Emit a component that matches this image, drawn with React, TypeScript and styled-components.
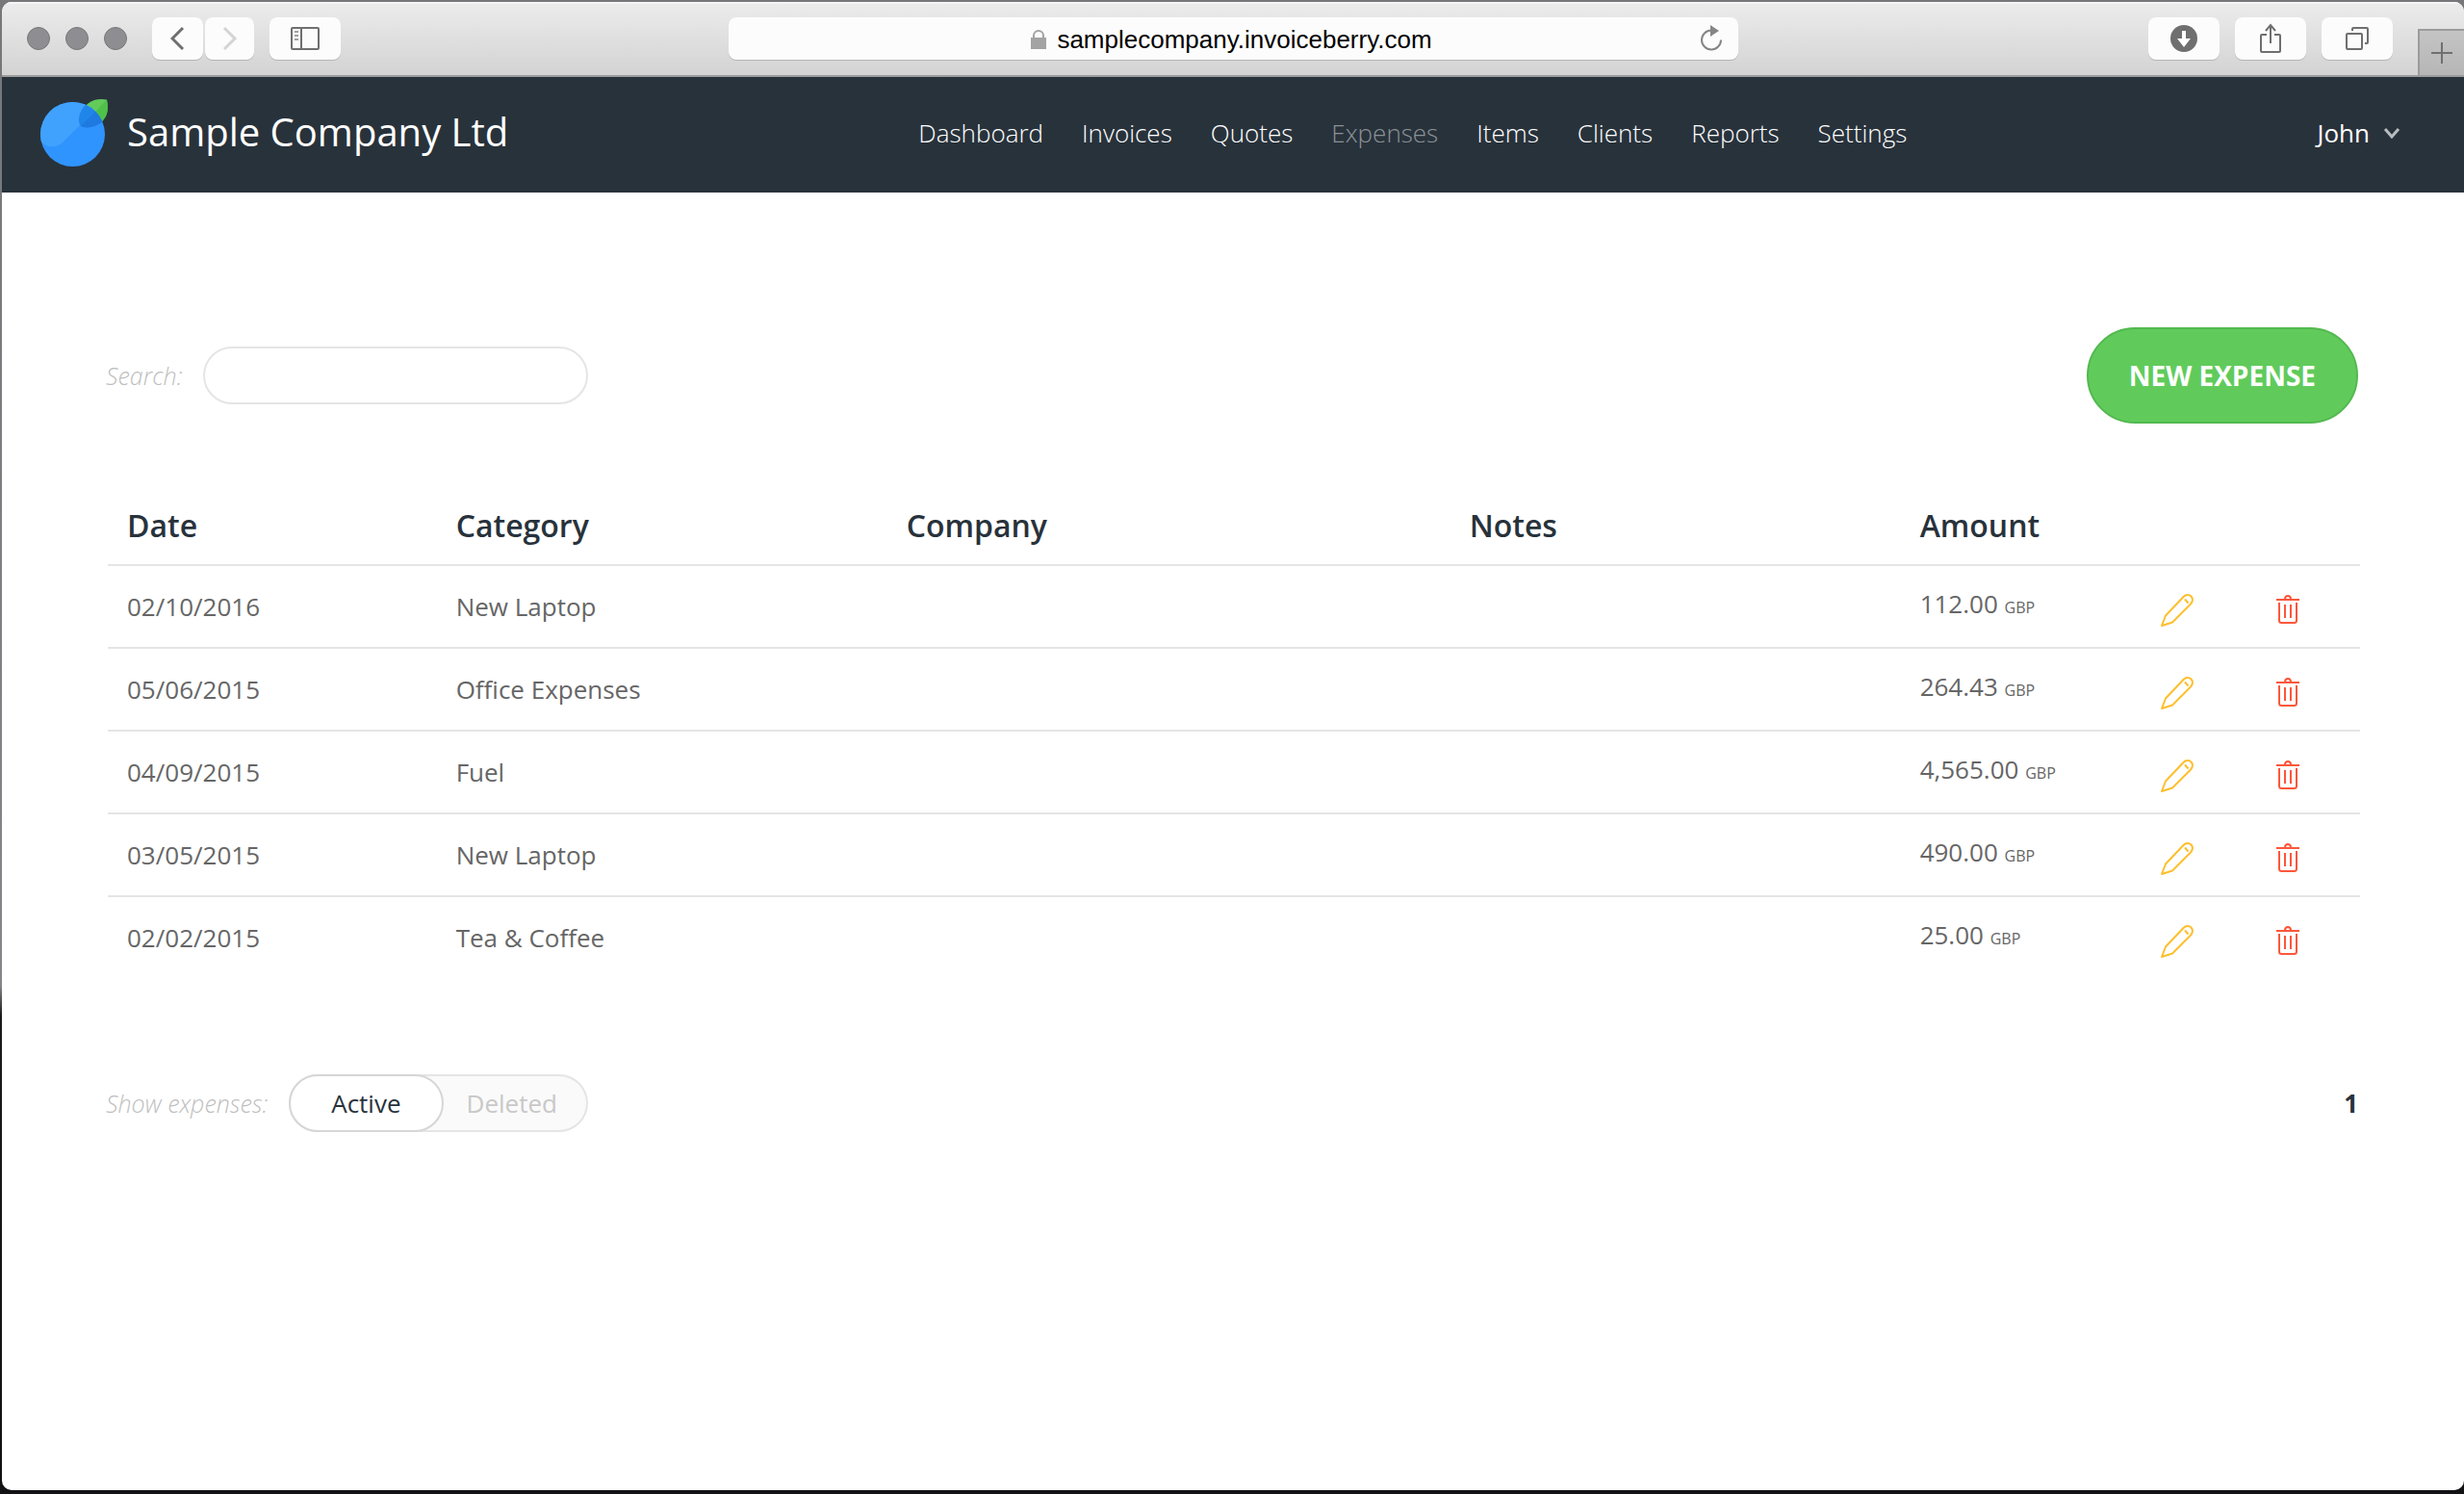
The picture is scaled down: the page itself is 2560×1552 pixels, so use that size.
import React, { useState } from "react";
import styled, { createGlobalStyle, css } from "styled-components";

const ink = "#28323b";
const line = "#e5e5e5";
const muted = "#c8c8c8";

const GlobalStyle = createGlobalStyle`
  *, *::before, *::after { box-sizing: border-box; }
  html, body, #root { height: 100%; }
  body {
    margin: 0;
    background: linear-gradient(#77777a 0%, #85858a 66%, #1a1a1c 68%, #121113 100%);
    font-family: "Open Sans", "Noto Sans", sans-serif;
    font-size: 26px;
    line-height: 36px;
    color: #666;
  }
  button, input { font: inherit; color: inherit; margin: 0; }
  button { cursor: pointer; }
`;

const Desktop = styled.div`
  min-height: 100%;
  display: flex;
  padding: 2px 0 4px 2px;
`;

const Window = styled.div`
  flex: 1;
  display: flex;
  flex-direction: column;
  background: #fff;
  border-radius: 10px;
  overflow: hidden;
`;

/* ---------- browser chrome ---------- */

const Chrome = styled.div`
  display: grid;
  grid-template-columns: 1fr minmax(0, 1049px) 1fr;
  height: 78px;
  background: linear-gradient(#ececec, #d3d3d3);
  border-bottom: 2px solid #9b9b9b;
  box-shadow: inset 0 2px 0 #f6f6f6;
`;

const ChromeSide = styled.div<{ $end?: boolean }>`
  display: flex;
  align-items: flex-start;
  padding-top: 16px;
  ${(p) => (p.$end ? css`justify-content: flex-end; gap: 16px;` : css`padding-left: 26px; gap: 16px;`)}
`;

const Lights = styled.div`
  display: flex;
  align-items: center;
  gap: 16px;
  height: 44px;
  margin-right: 10px;
`;

const Light = styled.span`
  width: 24px;
  height: 24px;
  border-radius: 50%;
  background: #8e8e92;
  border: 1px solid #77777a;
`;

const ButtonPair = styled.div`
  display: flex;
  gap: 2px;
`;

const ChromeButton = styled.button<{ $width?: number }>`
  display: flex;
  align-items: center;
  justify-content: center;
  width: ${(p) => p.$width ?? 74}px;
  height: 44px;
  padding: 0;
  border: 0;
  border-radius: 8px;
  background: #fcfcfc;
  box-shadow: 0 1px 0 #b5b5b5;
`;

const AddressBar = styled.div`
  display: grid;
  grid-template-columns: 1fr auto 1fr;
  align-items: center;
  height: 44px;
  margin-top: 16px;
  padding: 0 16px 0 12px;
  border-radius: 8px;
  background: #fcfcfc;
  box-shadow: 0 1px 0 #b5b5b5;
`;

const Address = styled.div`
  grid-column: 2;
  display: flex;
  align-items: center;
  gap: 10px;
  padding-top: 2px;
  font-family: "Liberation Sans", Arial, sans-serif;
  font-size: 26px;
  color: #000;
`;

const PlainButton = styled.button`
  display: flex;
  padding: 0;
  border: 0;
  background: none;
`;

const Reload = styled(PlainButton)`
  justify-self: end;
`;

const NewTab = styled.button`
  align-self: flex-end;
  display: flex;
  align-items: center;
  justify-content: center;
  width: 48px;
  height: 48px;
  margin-left: 10px;
  padding: 0;
  border: solid #9b9b9b;
  border-width: 2px 0 0 2px;
  background: linear-gradient(#c4c4c4, #b6b6b6);
`;

/* ---------- application header ---------- */

const Header = styled.header`
  display: flex;
  align-items: center;
  justify-content: space-between;
  height: 120px;
  padding: 0 66px 4px 40px;
  background: ${ink};
  color: #fff;
`;

const Brand = styled.a`
  display: flex;
  align-items: center;
  gap: 18px;
  color: inherit;
  text-decoration: none;
  font-size: 40px;
  line-height: 56px;
  white-space: nowrap;
`;

const BrandName = styled.span`
  padding-bottom: 2px;
`;

const Nav = styled.nav`
  display: flex;
  gap: 40px;
`;

const NavLink = styled.a<{ $current?: boolean }>`
  color: ${(p) => (p.$current ? "#8b9196" : "#fff")};
  font-weight: 300;
  text-decoration: none;
`;

const UserMenu = styled(PlainButton)`
  align-items: center;
  gap: 14px;
`;

/* ---------- page ---------- */

const Page = styled.main`
  padding: 140px 108px 0;
`;

const Bar = styled.div`
  display: flex;
  align-items: center;
  justify-content: space-between;
  padding-right: 2px;
`;

const Field = styled.div`
  display: flex;
  align-items: center;
  gap: 22px;
`;

const Caption = styled.label`
  font-size: 25px;
  font-weight: 300;
  font-style: italic;
  color: #bebebe;
`;

const SearchInput = styled.input`
  width: 400px;
  height: 60px;
  padding: 0 28px;
  border: 2px solid ${line};
  border-radius: 30px;
  background: #fff;
`;

const Primary = styled.button`
  height: 100px;
  padding: 0 42px;
  border: 2px solid #53b850;
  border-radius: 50px;
  background: #60cb5b;
  color: #fff;
  font-size: 28px;
  font-weight: 700;
  text-transform: uppercase;
`;

const TableArea = styled.section`
  padding: 66px 0 98px 2px;
`;

const Table = styled.table`
  width: 100%;
  border-collapse: separate;
  border-spacing: 0;
  table-layout: fixed;
`;

const Col = styled.col<{ $share: string }>`
  width: ${(p) => p.$share};
`;

const Th = styled.th`
  height: 82px;
  padding: 0 20px;
  border-bottom: 2px solid ${line};
  text-align: left;
  font-size: 32px;
  font-weight: 600;
  color: ${ink};
`;

const Row = styled.tr``;

const Td = styled.td`
  height: 86px;
  padding: 0 20px;
  border-bottom: 2px solid ${line};
  white-space: nowrap;

  ${Row}:last-child & { border-bottom-color: transparent; }
`;

const AmountTd = styled(Td)`
  padding-bottom: 2px;
`;

const Currency = styled.span`
  font-size: 16px;
`;

const IconTd = styled(Td)<{ $last?: boolean }>`
  padding: 8px ${(p) => (p.$last ? 18 : 0)}px 0 0;

  ${PlainButton} { margin: 0 auto; }
`;

const Toggle = styled.div`
  display: flex;
  height: 60px;
  border-radius: 30px;
  background: #fafafa;
  box-shadow: inset 0 0 0 2px ${line};
`;

const ToggleOption = styled.button<{ $on: boolean }>`
  height: 60px;
  padding: 0 ${(p) => (p.$on ? 42 : 30)}px 0 ${(p) => (p.$on ? 42 : 22)}px;
  border: 2px solid ${(p) => (p.$on ? "#d6d6d6" : "transparent")};
  border-radius: 30px;
  background: ${(p) => (p.$on ? "#fff" : "transparent")};
  color: ${(p) => (p.$on ? ink : muted)};
`;

const PageLink = styled.a`
  font-weight: 700;
  color: ${ink};
  text-decoration: none;
`;

/* ---------- drawings ---------- */

const stroke = { fill: "none", stroke: "#6f6f6f", strokeWidth: 2 } as const;

const Logo = () => (
  <svg width="72" height="72" viewBox="0 0 72 72" aria-hidden="true">
    <defs>
      <clipPath id="berry"><circle cx="33.500" cy="37.500" r="33.500" /></clipPath>
    </defs>
    <path d="M69 1.500C56 -1 45 5 41 18c-1 5-1 9 1 12 6 2 16 0 22-6 5-5 7-12 5-22.500z" fill="#62cb5a" />
    <path d="M69 1.500C71 13 70 19 62 26L42 30z" fill="#4fc04a" />
    <circle cx="33.500" cy="37.500" r="33.500" fill="#3094ff" />
    <g clipPath="url(#berry)">
      <path d="M0 0H67L43 26 24 45C18 52 7 52 0 45z" fill="#40a2fd" />
      <path d="M69 1.500C56 -1 45 5 41 16c-2 6-1 11 1 13 6 3 16 1 22-5z" fill="#2085e8" />
      <path d="M67 4L42 29c6 3 16 1 23-5z" fill="#1f7ae0" />
    </g>
  </svg>
);

const Pencil = () => (
  <svg width="36" height="36" viewBox="0 0 36 36" fill="none" stroke="#fdbf2d" strokeWidth="2" strokeLinejoin="round">
    <path d="M2 34L6 23.500 24.500 4C27 1.500 30.500 1.500 32.500 3.500S34.500 9 32 11.500L13 30.500z" />
    <path d="M26 6.500L29.500 10.500" />
  </svg>
);

const Trash = () => (
  <svg width="24" height="32" viewBox="0 0 24 32" fill="none" stroke="#fc573b" strokeWidth="2">
    <path d="M0 5H24M9 4.500Q9 1 12 1Q15 1 15 4.500" />
    <path d="M3 8V26.500Q3 29 5.500 29H18.500Q21 29 21 26.500V8M9 10V24M15 10V24" />
  </svg>
);

type Expense = { date: string; category: string; company?: string; notes?: string; amount: string };

const expenses: Expense[] = [
  { date: "02/10/2016", category: "New Laptop", amount: "112.00" },
  { date: "05/06/2015", category: "Office Expenses", amount: "264.43" },
  { date: "04/09/2015", category: "Fuel", amount: "4,565.00" },
  { date: "03/05/2015", category: "New Laptop", amount: "490.00" },
  { date: "02/02/2015", category: "Tea & Coffee", amount: "25.00" },
];

const sections = ["Dashboard", "Invoices", "Quotes", "Expenses", "Items", "Clients", "Reports", "Settings"];
const shares = ["14.6%", "20%", "25%", "20%", "9.8%", "5%", "5.6%"];

const BrowserChrome = () => (
  <Chrome>
    <ChromeSide>
      <Lights><Light /><Light /><Light /></Lights>
      <ButtonPair>
        <ChromeButton $width={53} aria-label="Back">
          <svg width="16" height="26" viewBox="0 0 16 26" {...stroke} strokeWidth="3"><path d="M13 2L2 13 13 24" /></svg>
        </ChromeButton>
        <ChromeButton $width={51} aria-label="Forward">
          <svg width="16" height="26" viewBox="0 0 16 26" {...stroke} stroke="#d4d4d4" strokeWidth="3"><path d="M2 2L13 13 2 24" /></svg>
        </ChromeButton>
      </ButtonPair>
      <ChromeButton aria-label="Sidebar">
        <svg width="30" height="24" viewBox="0 0 30 24" {...stroke}>
          <rect x="1" y="1" width="28" height="22" rx="1" />
          <path d="M11 1V23" />
          <path d="M4 5H8M4 9H8M4 13H8" stroke="#a0a0a0" />
        </svg>
      </ChromeButton>
    </ChromeSide>
    <AddressBar>
      <Address>
        <svg width="18" height="20" viewBox="0 0 18 20" aria-hidden="true">
          <path d="M1 8H17V20H1z" fill="#a3a3a3" />
          <path d="M4 9V6a5 5 0 0 1 10 0V9" fill="none" stroke="#a3a3a3" strokeWidth="2" />
        </svg>
        samplecompany.invoiceberry.com
      </Address>
      <Reload aria-label="Reload">
        <svg width="24" height="28" viewBox="0 0 24 28">
          <path d="M12 5.500A10 10 0 1 0 22 15.500" fill="none" stroke="#858585" strokeWidth="2" />
          <path d="M11 0L20 6 11 12z" fill="#858585" />
        </svg>
      </Reload>
    </AddressBar>
    <ChromeSide $end>
      <ChromeButton aria-label="Downloads">
        <svg width="28" height="28" viewBox="0 0 28 28">
          <circle cx="14" cy="14" r="14" fill="#6f6f6f" />
          <path d="M12 6H16V14H21L14 23 7 14H12z" fill="#fff" />
        </svg>
      </ChromeButton>
      <ChromeButton aria-label="Share">
        <svg width="24" height="32" viewBox="0 0 24 32" {...stroke}>
          <path d="M8 12H3Q2 12 2 13V29Q2 30 3 30H21Q22 30 22 29V13Q22 12 21 12H16" />
          <path d="M12 21V3M7 8L12 2 17 8" />
        </svg>
      </ChromeButton>
      <ChromeButton aria-label="Tabs">
        <svg width="26" height="26" viewBox="0 0 26 26" {...stroke}>
          <rect x="2" y="8" width="16" height="16" rx="1" />
          <path d="M8 5V3Q8 2 9 2H23Q24 2 24 3V17Q24 18 23 18H21" />
        </svg>
      </ChromeButton>
      <NewTab aria-label="New tab">
        <svg width="22" height="22" viewBox="0 0 22 22" {...stroke}><path d="M11 0V22M0 11H22" /></svg>
      </NewTab>
    </ChromeSide>
  </Chrome>
);

export default function App() {
  const [shown, setShown] = useState("Active");

  return (
    <>
      <GlobalStyle />
      <Desktop>
        <Window>
          <BrowserChrome />
          <Header>
            <Brand href="#home"><Logo /><BrandName>Sample Company Ltd</BrandName></Brand>
            <Nav>
              {sections.map((name) => (
                <NavLink key={name} href={`#${name.toLowerCase()}`} $current={name === "Expenses"}>{name}</NavLink>
              ))}
            </Nav>
            <UserMenu>
              John
              <svg width="18" height="12" viewBox="0 0 18 12" fill="none" stroke="#b9bcbf" strokeWidth="3"><path d="M2 2L9 10 16 2" /></svg>
            </UserMenu>
          </Header>
          <Page>
            <Bar>
              <Field>
                <Caption htmlFor="search">Search:</Caption>
                <SearchInput id="search" type="text" />
              </Field>
              <Primary>New expense</Primary>
            </Bar>
            <TableArea>
              <Table>
                <colgroup>{shares.map((share, i) => <Col key={i} $share={share} />)}</colgroup>
                <thead>
                  <tr>
                    <Th>Date</Th><Th>Category</Th><Th>Company</Th><Th>Notes</Th><Th>Amount</Th><Th /><Th />
                  </tr>
                </thead>
                <tbody>
                  {expenses.map((e) => (
                    <Row key={e.date}>
                      <Td>{e.date}</Td>
                      <Td>{e.category}</Td>
                      <Td>{e.company}</Td>
                      <Td>{e.notes}</Td>
                      <AmountTd>{e.amount} <Currency>GBP</Currency></AmountTd>
                      <IconTd><PlainButton aria-label="Edit"><Pencil /></PlainButton></IconTd>
                      <IconTd $last><PlainButton aria-label="Delete"><Trash /></PlainButton></IconTd>
                    </Row>
                  ))}
                </tbody>
              </Table>
            </TableArea>
            <Bar>
              <Field>
                <Caption as="span" id="show">Show expenses:</Caption>
                <Toggle role="group" aria-labelledby="show">
                  {["Active", "Deleted"].map((name) => (
                    <ToggleOption key={name} $on={shown === name} aria-pressed={shown === name} onClick={() => setShown(name)}>
                      {name}
                    </ToggleOption>
                  ))}
                </Toggle>
              </Field>
              <PageLink href="#page-1">1</PageLink>
            </Bar>
          </Page>
        </Window>
      </Desktop>
    </>
  );
}
